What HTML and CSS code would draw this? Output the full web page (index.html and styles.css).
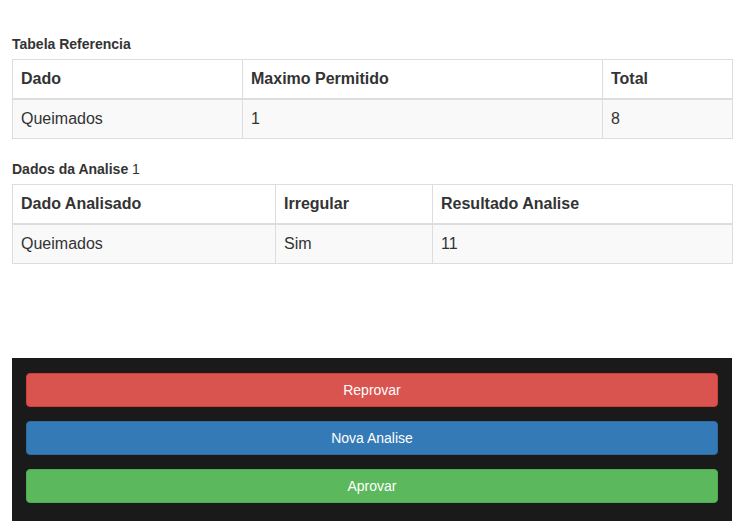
FILE: index.html
```html
<!DOCTYPE html>
<html lang="pt">
<head>
<meta charset="utf-8">
<title>Analise</title>
<link rel="stylesheet" href="styles.css">
</head>
<body>
<div class="page">
  <label class="caption">Tabela Referencia</label>
  <table class="tbl tbl-ref">
    <thead>
      <tr><th class="c-dado">Dado</th><th class="c-max">Maximo Permitido</th><th class="c-total">Total</th></tr>
    </thead>
    <tbody>
      <tr><td>Queimados</td><td>1</td><td>8</td></tr>
    </tbody>
  </table>

  <label class="caption">Dados da Analise <span class="normal">1</span></label>
  <table class="tbl tbl-analise">
    <thead>
      <tr><th class="c-dado2">Dado Analisado</th><th class="c-irr">Irregular</th><th class="c-res">Resultado Analise</th></tr>
    </thead>
    <tbody>
      <tr><td>Queimados</td><td>Sim</td><td>11</td></tr>
    </tbody>
  </table>

  <div class="actions">
    <button class="btn btn-danger" type="button">Reprovar</button>
    <button class="btn btn-primary" type="button">Nova Analise</button>
    <button class="btn btn-success" type="button">Aprovar</button>
  </div>
</div>
</body>
</html>
```

FILE: styles.css
```css
html, body {
  margin: 0;
  padding: 0;
  background: #fff;
}
body {
  font-family: "Liberation Sans", Arial, sans-serif;
  color: #333;
  font-size: 14px;
  line-height: 1.42857;
}
.page {
  width: 720px;
  padding: 34px 11px 0 12px;
}
.caption {
  display: inline-block;
  font-weight: bold;
  font-size: 14px;
  line-height: 20px;
  margin-bottom: 5px;
}
.caption .normal {
  font-weight: normal;
}
.tbl {
  width: 720px;
  border-collapse: collapse;
  border-spacing: 0;
  border: 1px solid #ddd;
  margin-bottom: 20px;
  font-size: 16px;
  table-layout: fixed;
}
.tbl th,
.tbl td {
  border: 1px solid #ddd;
  padding: 8px;
  line-height: 22px;
  text-align: left;
  vertical-align: top;
}
.tbl th {
  font-weight: bold;
  background: #fff;
}
.tbl thead th {
  border-bottom-width: 2px;
}
.tbl tbody td {
  background: #f9f9f9;
}
.c-dado { width: 213px; }
.c-max { width: 343px; }
.c-total { width: 113px; }
.c-dado2 { width: 246px; }
.c-irr { width: 140px; }
.c-res { width: 283px; }

.actions {
  margin-top: 94px;
  background: #1a1a1a;
  padding: 15px 14px 30px;
  display: flex;
  flex-direction: column;
  gap: 14px;
}
.btn {
  display: block;
  width: 100%;
  font-family: "Liberation Sans", Arial, sans-serif;
  font-size: 14px;
  line-height: 20px;
  padding: 6px 12px;
  border: 1px solid transparent;
  border-radius: 4px;
  color: #fff;
  text-align: center;
  cursor: pointer;
}
.btn-danger {
  background: #d9534f;
  border-color: #d43f3a;
}
.btn-primary {
  background: #337ab7;
  border-color: #2e6da4;
}
.btn-success {
  background: #5cb85c;
  border-color: #4cae4c;
}
```
